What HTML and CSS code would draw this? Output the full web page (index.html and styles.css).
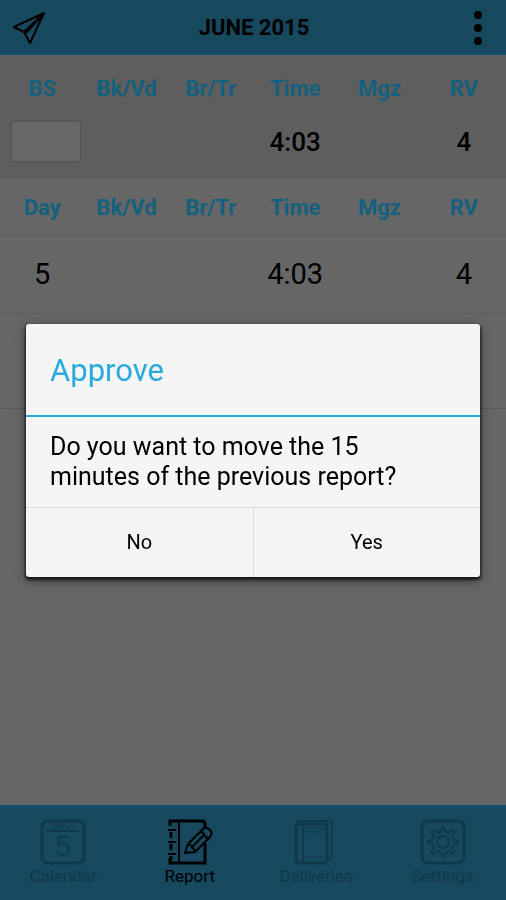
FILE: index.html
```html
<!DOCTYPE html>
<html lang="en">
<head>
    <meta charset="UTF-8">
    <meta name="viewport" content="width=device-width, initial-scale=1.0">
    <title>Report - June 2015</title>
    <link rel="stylesheet" href="styles.css">
</head>
<body>

    <header class="topbar">
        <button class="icon-button" type="button" aria-label="Send">
            <svg width="34" height="34" viewBox="0 0 34 34" fill="none" stroke="#000" stroke-width="2" stroke-linejoin="round">
                <path d="M32 2 L2 16 L12 21 L18 32 Z" />
                <path d="M32 2 L12 21 M32 2 L14 22" />
                <path d="M32 2 L24 6 L28 11 Z" fill="#000" stroke="none" />
            </svg>
        </button>
        <h1>JUNE 2015</h1>
        <button class="icon-button" type="button" aria-label="More options">
            <svg width="10" height="36" viewBox="0 0 10 36" fill="#000">
                <circle cx="5" cy="5" r="4" />
                <circle cx="5" cy="18" r="4" />
                <circle cx="5" cy="31" r="4" />
            </svg>
        </button>
    </header>

    <main class="content">
        <!-- Month totals -->
        <section class="summary">
            <table class="report">
                <thead>
                    <tr>
                        <th id="bs" scope="col">BS</th>
                        <th scope="col">Bk/Vd</th>
                        <th scope="col">Br/Tr</th>
                        <th scope="col">Time</th>
                        <th scope="col">Mgz</th>
                        <th scope="col">RV</th>
                    </tr>
                </thead>
                <tbody>
                    <tr class="totals">
                        <td><input class="bs-input" type="text" aria-labelledby="bs"></td>
                        <td></td>
                        <td></td>
                        <td>4:03</td>
                        <td></td>
                        <td>4</td>
                    </tr>
                </tbody>
            </table>
        </section>

        <!-- Daily rows -->
        <table class="report days">
            <thead>
                <tr>
                    <th scope="col">Day</th>
                    <th scope="col">Bk/Vd</th>
                    <th scope="col">Br/Tr</th>
                    <th scope="col">Time</th>
                    <th scope="col">Mgz</th>
                    <th scope="col">RV</th>
                </tr>
            </thead>
            <tbody>
                <tr>
                    <td>5</td>
                    <td></td>
                    <td></td>
                    <td>4:03</td>
                    <td></td>
                    <td>4</td>
                </tr>
                <tr class="empty-row">
                    <td colspan="6"></td>
                </tr>
            </tbody>
        </table>
    </main>

    <nav class="tabbar">
        <a class="tab" href="#calendar">
            <svg width="46" height="46" viewBox="0 0 46 46" fill="none" stroke="currentColor">
                <rect x="2" y="2" width="42" height="42" rx="6" stroke-width="3" />
                <path d="M6 12 H40" stroke-width="2" />
                <path d="M13 5 h4 v4 h-4 z M20 5 h3 v4 h-3 z M26 5 v4 h4 v-4 M33 5 v4" stroke-width="1" />
                <path d="M29 18 H19 L18 26 C22 23 29 25 29 30 C29 37 19 38 17 32" stroke-width="2" />
            </svg>
            <span>Calendar</span>
        </a>
        <a class="tab active" href="#report">
            <svg width="46" height="46" viewBox="0 0 46 46" fill="none" stroke="currentColor">
                <path d="M38 9 V5 Q38 2 35 2 H3 V7 M38 24 V44 H3 V39" stroke-width="3" />
                <path d="M12 2 V44" stroke-width="2" />
                <path d="M4 13 V19 M4 25 V31 M4 37 V41" stroke-width="3" />
                <path d="M1 11 H9 M1 23 H9 M1 35 H9" stroke-width="2" />
                <path d="M18 34 L21 25 L36 10 Q39 7 43 11 Q46 14 43 18 L28 33 Z M21 25 Q26 26 28 33 M34 12 L41 20 M24 29 L38 15" stroke-width="2" stroke-linejoin="round" />
            </svg>
            <span>Report</span>
        </a>
        <a class="tab" href="#deliveries">
            <svg width="46" height="46" viewBox="0 0 46 46" fill="none" stroke="currentColor">
                <rect x="3" y="5" width="31" height="39" rx="3" stroke-width="3" />
                <path d="M4 4 Q5 2 8 2 H36 Q39 2 39 5 V37 Q39 40 35 41" stroke-width="2" />
                <path d="M10 6 V43" stroke-width="2" />
                <path d="M12 9 H31 M12 13 H31 M12 38 H31" stroke-width="1" />
            </svg>
            <span>Deliveries</span>
        </a>
        <a class="tab" href="#settings">
            <svg width="46" height="46" viewBox="0 0 46 46" fill="none" stroke="currentColor">
                <rect x="2" y="2" width="42" height="42" rx="6" stroke-width="3" />
                <g stroke-width="2" stroke-linejoin="round">
                    <circle cx="23" cy="23" r="6" />
                    <path d="M21 12 L22 8 H24 L25 12 L29 14 L33 11 L35 13 L32 17 L34 21 L38 22 V24 L34 25 L32 29 L35 33 L33 35 L29 32 L25 34 L24 38 H22 L21 34 L17 32 L13 35 L11 33 L14 29 L12 25 L8 24 V22 L12 21 L14 17 L11 13 L13 11 L17 14 Z" />
                </g>
            </svg>
            <span>Settings</span>
        </a>
    </nav>

    <div class="overlay">
        <div class="dialog" role="dialog" aria-modal="true" aria-labelledby="dialog-title">
            <h2 id="dialog-title">Approve</h2>
            <p>Do you want to move the 15 minutes of the previous report?</p>
            <div class="dialog-buttons">
                <button type="button">No</button>
                <button type="button">Yes</button>
            </div>
        </div>
    </div>

</body>
</html>
```

FILE: styles.css
```css
* {
    box-sizing: border-box;
}

body {
    margin: 0;
    min-height: 100vh;
    display: flex;
    flex-direction: column;
    font-family: Roboto, sans-serif;
    color: #000;
    background: #666;
}

button {
    font-family: inherit;
    color: inherit;
    background: none;
    border: none;
    cursor: pointer;
}

.topbar {
    display: flex;
    justify-content: space-between;
    align-items: center;
    height: 55px;
    padding: 2px 12px 0;
    background: #16485e;
    border-bottom: 2px solid #0b5271;
}

.topbar h1 {
    margin: 0;
    font-size: 22px;
    font-weight: bold;
}

.icon-button {
    display: flex;
    width: 34px;
    padding: 0;
}

.icon-button:last-child {
    justify-content: center;
    width: 32px;
}

.content {
    flex: 1;
}

.summary {
    padding-bottom: 14px;
    background: #5e5e5e;
    border-bottom: 1px solid #5a5a5a;
}

.report {
    width: 100%;
    table-layout: fixed;
    border-collapse: collapse;
    text-align: center;
}

.report th,
.report td {
    padding: 0;
}

.report th {
    height: 65px;
    padding-top: 2px;
    font-size: 22px;
    font-weight: bold;
    color: #14607f;
}

.totals td {
    height: 43px;
    font-size: 26px;
    font-weight: 500;
}

.bs-input {
    display: block;
    width: 72px;
    height: 43px;
    margin-left: 10px;
    background: #686868;
    border: 2px solid #575757;
    border-radius: 5px;
}

.report.days th {
    height: 57px;
    border-bottom: 1px solid #5a5a5a;
}

.days td {
    height: 78px;
    font-size: 29px;
    border-bottom: 1px solid #5a5a5a;
}

.days .empty-row td {
    height: 95px;
}

.tabbar {
    display: flex;
    height: 95px;
    background: #16485e;
    border-top: 2px solid #0f4f6b;
}

.tab {
    flex: 1;
    display: flex;
    flex-direction: column;
    align-items: center;
    padding-top: 12px;
    font-size: 17px;
    line-height: 22px;
    color: #0f384a;
    text-decoration: none;
}

.tab.active {
    color: #000;
}

.overlay {
    position: fixed;
    inset: 0;
    display: flex;
    justify-content: center;
    align-items: center;
    padding: 0 26px;
}

.dialog {
    width: 100%;
    max-width: 520px;
    background: #f5f5f5;
    border-radius: 3px;
    box-shadow: 0 2px 3px 1px rgba(0, 0, 0, 0.7), 0 4px 12px rgba(0, 0, 0, 0.4);
}

.dialog h2 {
    margin: 0;
    padding: 2px 24px 0;
    font-size: 31px;
    font-weight: normal;
    line-height: 89px;
    color: #28aadc;
    border-bottom: 2px solid #28aadc;
}

.dialog p {
    margin: 0;
    padding: 15px 40px 15px 24px;
    font-size: 25px;
    line-height: 30px;
}

.dialog-buttons {
    display: flex;
    border-top: 1px solid #ddd;
}

.dialog-buttons button {
    flex: 1;
    height: 69px;
    font-size: 20px;
}

.dialog-buttons button + button {
    border-left: 1px solid #ddd;
}
```
